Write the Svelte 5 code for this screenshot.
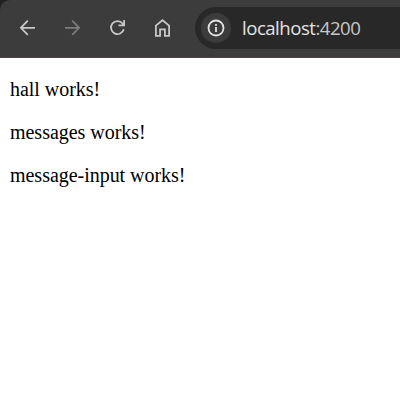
<script>
  const lines = ['hall works!', 'messages works!', 'message-input works!'];
</script>

<div class="window">
  <header class="toolbar">
    <nav class="buttons">
      <svg viewBox="0 0 20 20"><path d="M17 9.8H3M9.8 2.7L2.9 9.8l6.9 7" /></svg>
      <svg class="disabled" viewBox="0 0 20 20"><path d="M2 9.8h14M9.2 2.7l6.9 7.1-6.9 7" /></svg>
      <svg viewBox="0 0 20 20"><path d="M15.8 11.2A6.5 6.5 0 1 1 14.6 5.5l1.2 1.6M16.1 2v5.4h-5.6" /></svg>
      <svg viewBox="0 0 20 20"><path d="M2.9 17.9V7.6L9.5 2.2l6.6 5.4v10.3h-4.2v-6.6H7.1v6.6z" /></svg>
    </nav>
    <div class="address">
      <span class="info">
        <svg viewBox="0 0 20 20">
          <circle cx="10" cy="10" r="7.5" />
          <path d="M10 9v5M10 6v1.8" />
        </svg>
      </span>
      <span class="url">localhost<span class="port">:4200</span></span>
    </div>
  </header>
  <main>
    {#each lines as line}
      <p>{line}</p>
    {/each}
  </main>
</div>

<style>
  :global(body) {
    margin: 0;
    background: #fff;
  }
  .window {
    width: 400px;
    height: 400px;
    overflow: hidden;
    background: linear-gradient(#202222 0 20px, #fff 20px);
  }
  .toolbar {
    box-sizing: border-box;
    height: 58px;
    padding: 7px 0 0 18px;
    display: flex;
    gap: 5px;
    background: #3c3c3c;
    border-bottom: 1px solid #4a4446;
    border-top-left-radius: 10px;
  }
  .buttons {
    display: flex;
    align-items: center;
    gap: 25px;
    height: 42px;
    width: 172px;
    flex: none;
  }
  svg {
    display: block;
    flex: none;
    width: 20px;
    height: 20px;
    fill: none;
    stroke: #c7c7c7;
    stroke-width: 1.8;
  }
  .disabled {
    stroke: #7b7b7b;
  }
  .address {
    flex: 1;
    height: 42px;
    display: flex;
    align-items: center;
    gap: 11px;
    padding-left: 6px;
    border-radius: 21px 0 0 21px;
    background: #282828;
  }
  .info {
    width: 30px;
    height: 30px;
    flex: none;
    display: grid;
    place-items: center;
    border-radius: 50%;
    background: #3c3c3c;
  }
  .info svg {
    stroke: #e3e3e3;
  }
  .url {
    font: 18.6px/42px "Open Sans", "Noto Sans", sans-serif;
    letter-spacing: -0.5px;
    color: #e3e3e3;
    white-space: nowrap;
  }
  .port {
    color: #c7c7c7;
  }
  main {
    padding: 20px 10px;
    font: 20px/23px "Liberation Serif", "Times New Roman", serif;
    letter-spacing: -0.03px;
    color: #000;
  }
  p {
    margin: 0 0 20px;
  }
</style>
